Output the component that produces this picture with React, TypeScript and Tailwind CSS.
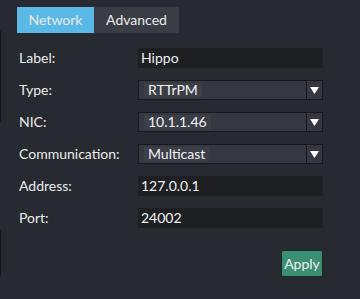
import { useState } from "react";

const FONT = { fontFamily: 'Lato, "Liberation Sans", sans-serif' };

function Select({ value }: { value: string }) {
  return (
    <div className="flex h-5 w-[185px] border border-[#17191c] bg-[#353841]">
      <div className="flex flex-1 items-center pl-[5px]">
        <span className="flex h-[14px] items-center bg-[#3c3f48] px-[4px] text-[#f2f2f2]">{value}</span>
      </div>
      <div className="flex w-[16px] items-center justify-center border-l border-[#17191c]">
        <svg width="9" height="8" viewBox="0 0 9 8">
          <path d="M0 1h9L4.5 8z" fill="#ffffff" />
        </svg>
      </div>
    </div>
  );
}

function Input({ value }: { value: string }) {
  return (
    <div className="flex h-5 w-[185px] items-center bg-[#1d1f23] pl-[3px] text-[#f2f2f2]">{value}</div>
  );
}

export default function App() {
  const [tab, setTab] = useState("network");

  const rows: { label: string; value: string; kind: "input" | "select" }[] = [
    { label: "Label:", value: "Hippo", kind: "input" },
    { label: "Type:", value: "RTTrPM", kind: "select" },
    { label: "NIC:", value: "10.1.1.46", kind: "select" },
    { label: "Communication:", value: "Multicast", kind: "select" },
    { label: "Address:", value: "127.0.0.1", kind: "input" },
    { label: "Port:", value: "24002", kind: "input" },
  ];

  return (
    <div className="flex h-[299px] w-[360px] bg-[#272a31] text-[14px] leading-5 text-[#eaeaea]" style={FONT}>
      <div className="flex w-px flex-col">
        <div className="h-[31px]" />
        <div className="h-[91px] bg-[#15161a]" />
        <div className="h-[108px]" />
        <div className="h-[46px] bg-[#15161a]" />
      </div>
      <div className="flex-1">
        <div className="flex pl-[16px] pt-[7px]">
          <button
            onClick={() => setTab("network")}
            className={`h-[26px] w-[77px] ${tab === "network" ? "bg-[#59b8e6]" : "bg-[#3a3d45]"}`}
          >
            Network
          </button>
          <button
            onClick={() => setTab("advanced")}
            className={`h-[26px] w-[85px] ${tab === "advanced" ? "bg-[#59b8e6]" : "bg-[#3a3d45]"}`}
          >
            Advanced
          </button>
        </div>

        <div className="flex flex-col gap-3 pl-[18px] pt-[15px]">
          {rows.map((r) => (
            <div key={r.label} className="flex h-5 items-center">
              <div className="w-[119px]">{r.label}</div>
              {r.kind === "select" ? <Select value={r.value} /> : <Input value={r.value} />}
            </div>
          ))}
        </div>

        <div className="flex justify-end pr-[37px] pt-[22px]">
          <button className="h-[27px] w-[42px] rounded-[2px] border border-[#1b2a24] bg-[#3a8f72] text-[#f2f2f2]">
            Apply
          </button>
        </div>
      </div>
    </div>
  );
}
